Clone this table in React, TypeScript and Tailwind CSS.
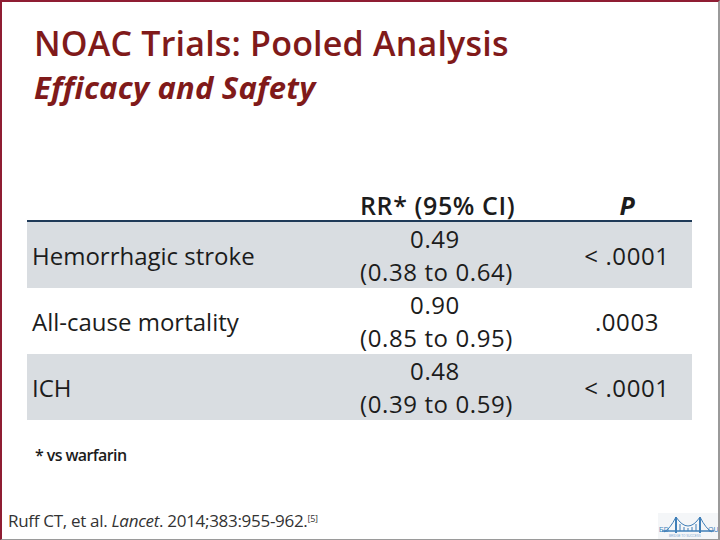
import React from 'react';

interface Row {
  label: string;
  rr: string;
  ci: string;
  p: string;
  shaded: boolean;
}

const rows: Row[] = [
  { label: 'Hemorrhagic stroke', rr: '0.49', ci: '(0.38 to 0.64)', p: '< .0001', shaded: true },
  { label: 'All-cause mortality', rr: '0.90', ci: '(0.85 to 0.95)', p: '.0003', shaded: false },
  { label: 'ICH', rr: '0.48', ci: '(0.39 to 0.59)', p: '< .0001', shaded: true },
];

const BridgeLogo: React.FC = () => (
  <svg width="60" height="26" viewBox="0 0 60 26">
    <rect x="0" y="0" width="60" height="26" fill="#f4f6f8" />
    <g stroke="#3f7fb8" fill="none" strokeWidth="1">
      <line x1="18" y1="4" x2="18" y2="20" strokeWidth="2" />
      <line x1="42" y1="4" x2="42" y2="20" strokeWidth="2" />
      <path d="M6 19 Q12 16 18 4 Q30 22 42 4 Q48 16 54 19" />
      <line x1="4" y1="18" x2="56" y2="18" strokeWidth="1.5" />
      <line x1="22" y1="11" x2="22" y2="18" />
      <line x1="26" y1="14" x2="26" y2="18" />
      <line x1="30" y1="15" x2="30" y2="18" />
      <line x1="34" y1="14" x2="34" y2="18" />
      <line x1="38" y1="11" x2="38" y2="18" />
    </g>
    <text x="1" y="19" fontSize="7" fill="#3f7fb8" fontFamily="Liberation Sans, sans-serif">ED</text>
    <text x="50" y="19" fontSize="7" fill="#3f7fb8" fontFamily="Liberation Sans, sans-serif">OU</text>
    <text x="11" y="24" fontSize="3" fill="#7aa6cf" fontFamily="Liberation Sans, sans-serif">BRIDGE TO SUCCESS</text>
  </svg>
);

const App: React.FC = () => {
  return (
    <div className="w-[720px] h-[540px] bg-white font-['Open_Sans',sans-serif] text-[#1c1c1c] border-t-2 border-l-2 border-t-[#8f1d33] border-l-[#8f1d33] border-r-2 border-r-[#9a9a9a] border-b border-b-[#9a9a9a] flex flex-col overflow-hidden">
      <div className="pl-[32px] pt-[20px]">
        <h1 className="text-[34px] leading-[42px] font-semibold text-[#801a1a] tracking-[0.2px]">
          NOAC Trials: Pooled Analysis
        </h1>
        <h2 className="text-[31px] leading-[40px] mt-[3px] font-bold italic text-[#801a1a] tracking-[0.2px]">
          Efficacy and Safety
        </h2>
      </div>

      <div className="ml-[25px] mt-[80px] w-[665px]">
        <div className="grid grid-cols-[333px_150px_1fr] h-[35px] items-end border-b-2 border-[#1f3a58] text-[25px] leading-[30px] font-semibold">
          <div />
          <div className="text-center whitespace-nowrap tracking-[0.6px]">RR* (95% CI)</div>
          <div className="text-center pl-[52px] italic font-bold">P</div>
        </div>
        {rows.map((row) => (
          <div
            key={row.label}
            className={`grid grid-cols-[333px_150px_1fr] h-[66px] items-center text-[24px] leading-[33px] ${row.shaded ? 'bg-[#d9dde1]' : 'bg-white'}`}
          >
            <div className="pl-[5px]">{row.label}</div>
            <div className="text-center whitespace-nowrap tracking-[0.6px]">
              <div>{row.rr}</div>
              <div>{row.ci}</div>
            </div>
            <div className="text-center pl-[52px] tracking-[0.6px]">{row.p}</div>
          </div>
        ))}
      </div>

      <div className="pl-[33px] mt-[23px] text-[16px] font-semibold tracking-[-0.6px]">* vs warfarin</div>

      <div className="mt-auto flex items-end justify-between">
        <div className="pl-[6px] pb-[6px] text-[17px] text-[#333] tracking-[-0.3px]">
          Ruff CT, et al. <i>Lancet</i>. 2014;383:955-962.<sup className="text-[9px]">[5]</sup>
        </div>
        <BridgeLogo />
      </div>
    </div>
  );
};

export default App;
